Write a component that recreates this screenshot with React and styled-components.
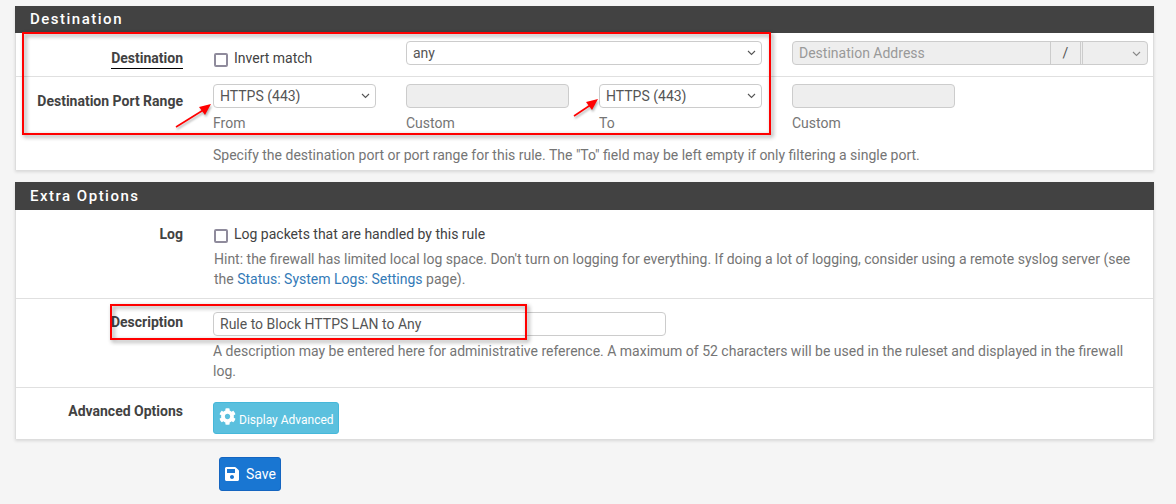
import React from "react";
import styled, { createGlobalStyle } from "styled-components";

const Global = createGlobalStyle`
  html, body { margin: 0; padding: 0; background: #f5f5f5; }
  body { font-family: Roboto, "Liberation Sans", sans-serif; font-size: 14px; line-height: 20px; color: #424242; overflow: hidden; }
`;
const Page = styled.div`
  position: relative;
  width: 1176px;
  height: 504px;
  padding: 6px 22px 0 15px;
  box-sizing: border-box;
`;
const Panel = styled.section`
  background: #fff;
  border-left: 1px solid #ddd;
  border-right: 1px solid #ddd;
  box-shadow: 0 2px 3px rgba(0,0,0,.12);
  margin-bottom: ${p => p.$mb || 12}px;
`;
const Heading = styled.h2`
  margin: 0 -1px;
  height: ${p => p.$h || 27}px;
  background: #424242;
  color: #fff;
  font-size: 15px;
  font-weight: 500;
  letter-spacing: 1.5px;
  line-height: ${p => p.$h || 27}px;
  padding-left: 15px;
`;
const Row = styled.div`
  display: grid;
  grid-template-columns: 167px 1fr;
  column-gap: 30px;
  height: ${p => p.$h}px;
  padding-top: ${p => p.$pt || 8}px;
  box-sizing: border-box;
  border-bottom: ${p => (p.$last ? "none" : "1px solid #e0e0e0")};
`;
const Label = styled.label`
  justify-self: end;
  align-self: start;
  font-weight: 700;
  font-size: 14px;
  line-height: 20px;
  margin-top: ${p => p.$mt || 0}px;
  color: #424242;
  ${p => p.$underline && "border-bottom: 1px solid #000; line-height: 18px; height: 19px;"}
`;
const Fields = styled.div`
  display: grid;
  grid-template-columns: repeat(5, 163px);
  column-gap: 30px;
`;
const CheckLabel = styled.div`
  display: flex;
  align-items: center;
  gap: 6px;
  height: 20px;
  margin-top: ${p => p.$mt || 0}px;
`;
const Box = styled.span`
  display: inline-block;
  box-sizing: border-box;
  width: 14px;
  height: 14px;
  margin: 3px 0 0 1px;
  border: 2px solid #8f8b9c;
  border-radius: 2px;
  background: #fff;
`;
const SelectWrap = styled.div`
  position: relative;
  grid-column: span ${p => p.$span || 1};
`;
const Select = styled.select`
  display: block;
  appearance: none;
  width: 100%;
  height: 24px;
  box-sizing: border-box;
  font: 14px Roboto, sans-serif;
  color: #555;
  background: #fff;
  border: 1px solid #ccc;
  border-radius: 4px;
  padding: 0 6px;
  outline: none;
`;
const ChevronIcon = styled.svg`
  position: absolute;
  right: 6px;
  top: 9px;
  width: 9px;
  height: 6px;
  pointer-events: none;
  fill: none;
  stroke: ${p => (p.$muted ? "#888" : "#555")};
  stroke-width: 1.1;
`;
const Chevron = ({ muted }) => (
  <ChevronIcon $muted={muted} viewBox="0 0 9 6"><path d="M1 1l3.5 3.5L8 1" /></ChevronIcon>
);
const Input = styled.input`
  display: block;
  width: ${p => p.$w || "100%"};
  height: 24px;
  box-sizing: border-box;
  font: 14px Roboto, sans-serif;
  color: #555;
  background: ${p => (p.disabled ? "#eee" : "#fff")};
  border: 1px solid #ccc;
  border-radius: 4px;
  padding: 0 6px;
  outline: none;
`;
const AddressGroup = styled.div`
  position: relative;
  grid-column: span 2;
  display: flex;
  width: 356px;
  height: 24px;
  box-sizing: border-box;
  border: 1px solid #ccc;
  border-radius: 4px;
  background: #eee;
`;
const AddressText = styled.div`
  flex: 1;
  color: #999;
  font-size: 14px;
  line-height: 22px;
  padding-left: 6px;
`;
const Slash = styled.div`
  width: 29px;
  text-align: center;
  line-height: 22px;
  color: #555;
  border-left: 1px solid #ccc;
  border-right: 1px solid #ccc;
`;
const MaskCell = styled.div`
  width: 64px;
  margin-left: 1px;
  border-left: 1px solid #ccc;
`;
const SubText = styled.div`
  color: #757575;
  font-size: 14px;
  line-height: 20px;
  margin-top: 5px;
`;
const Help = styled.p`
  margin: ${p => p.$mt || 0}px 0 0 ${p => p.$ml || 0}px;
  color: #757575;
  font-size: 14px;
  line-height: 20px;
  width: ${p => p.$w || "920px"};
`;
const HelpRow = styled.div`
  box-sizing: border-box;
  padding: ${p => p.$pt}px 0 0 197px;
  height: ${p => p.$h}px;
`;
const Link = styled.a`
  color: #337ab7;
  text-decoration: none;
`;
const InfoButton = styled.button`
  display: flex;
  align-items: center;
  gap: 3px;
  height: 32px;
  width: 126px;
  margin-top: 1px;
  box-sizing: border-box;
  padding: 0 0 0 5px;
  background: #5bc0de;
  border: 1px solid #46b8da;
  border-radius: 3px;
  color: #fff;
  font: 12px Roboto, sans-serif;
  & > span { margin-top: 3px; }
  & > svg { margin-top: -3px; }
`;
const SaveRow = styled.div`
  padding-left: 204px;
`;
const SaveButton = styled.button`
  display: flex;
  align-items: center;
  gap: 6px;
  height: 34px;
  width: 62px;
  box-sizing: border-box;
  padding: 0 0 0 4px;
  background: #1976d2;
  border: 1px solid #1565c0;
  border-radius: 3px;
  color: #fff;
  font: 14px Roboto, sans-serif;
`;
const RedBox = styled.div`
  position: absolute;
  left: ${p => p.$x}px;
  top: ${p => p.$y}px;
  width: ${p => p.$w}px;
  height: ${p => p.$h}px;
  box-sizing: border-box;
  border: 2px solid #f00;
  pointer-events: none;
  filter: drop-shadow(2px 2px 2px rgba(0,0,0,.45));
`;
const Arrow = styled.svg`
  position: absolute;
  left: ${p => p.$x}px;
  top: ${p => p.$y}px;
  overflow: visible;
  filter: drop-shadow(1px 2px 1px rgba(0,0,0,.3));
`;

const Gear = () => (
  <svg width="17" height="17" viewBox="0 0 512 512" fill="#fff">
    <path d="M487.4 315.7l-42.6-24.6c4.3-23.2 4.3-47 0-70.2l42.6-24.6c4.9-2.8 7.1-8.6 5.5-14-11.1-35.6-30-67.8-54.7-94.6-3.8-4.1-10-5.1-14.8-2.3L380.8 110c-17.9-15.4-38.5-27.3-60.8-35.1V25.8c0-5.6-3.9-10.5-9.4-11.7-36.7-8.2-74.3-7.8-109.2 0-5.5 1.2-9.4 6.1-9.4 11.7V75c-22.2 7.9-42.8 19.8-60.8 35.1L88.7 85.5c-4.9-2.8-11-1.9-14.8 2.3-24.7 26.7-43.6 58.9-54.7 94.6-1.7 5.4.6 11.2 5.5 14L67.3 221c-4.3 23.2-4.3 47 0 70.2l-42.6 24.6c-4.9 2.8-7.1 8.6-5.5 14 11.1 35.6 30 67.8 54.7 94.6 3.8 4.1 10 5.1 14.8 2.3l42.6-24.6c17.9 15.4 38.5 27.3 60.8 35.1v49.2c0 5.6 3.9 10.5 9.4 11.7 36.7 8.2 74.3 7.8 109.2 0 5.5-1.2 9.4-6.1 9.4-11.7v-49.2c22.2-7.9 42.8-19.8 60.8-35.1l42.6 24.6c4.9 2.8 11 1.9 14.8-2.3 24.7-26.7 43.6-58.9 54.7-94.6 1.5-5.5-.7-11.3-5.6-14.1zM256 336c-44.1 0-80-35.9-80-80s35.9-80 80-80 80 35.9 80 80-35.9 80-80 80z" />
  </svg>
);
const Floppy = () => (
  <svg width="16" height="16" viewBox="0 0 448 512" fill="#fff">
    <path d="M433.9 129.9l-83.9-83.9A48 48 0 0 0 316.1 32H48C21.5 32 0 53.5 0 80v352c0 26.5 21.5 48 48 48h352c26.5 0 48-21.5 48-48V163.9a48 48 0 0 0-14.1-34zM224 416c-35.3 0-64-28.7-64-64s28.7-64 64-64 64 28.7 64 64-28.7 64-64 64zm96-304.5V212c0 6.6-5.4 12-12 12H76c-6.6 0-12-5.4-12-12V108c0-6.6 5.4-12 12-12h228.5c3.2 0 6.2 1.3 8.5 3.5l3.5 3.5c2.3 2.3 3.5 5.3 3.5 8.5z" />
  </svg>
);
const RedArrow = ({ x, y, w, h }) => (
  <Arrow $x={x} $y={y} width={w} height={h} viewBox={`0 0 ${w} ${h}`}>
    <line x1="1" y1={h - 1} x2={w - 6} y2="5" stroke="#f00" strokeWidth="1.6" />
    <polygon points={`${w},0 ${w - 12},3 ${w - 6},11`} fill="#f00" />
  </Arrow>
);
const PortSelect = () => (
  <SelectWrap>
    <Select><option>HTTPS (443)</option></Select>
    <Chevron />
  </SelectWrap>
);

export default function App() {
  return (
    <Page>
      <Global />
      <Panel>
        <Heading>Destination</Heading>
        <Row $h={44}>
          <Label $underline $mt={8}>Destination</Label>
          <Fields>
            <CheckLabel $mt={7}><Box />Invert match</CheckLabel>
            <SelectWrap $span={2}>
              <Select defaultValue="any"><option>any</option></Select>
              <Chevron />
            </SelectWrap>
            <AddressGroup>
              <AddressText>Destination Address</AddressText>
              <Slash>/</Slash>
              <MaskCell />
              <Chevron muted />
            </AddressGroup>
          </Fields>
        </Row>
        <Row $h={60} $last $pt={7}>
          <Label $mt={7}>Destination Port Range</Label>
          <Fields>
            <div><PortSelect /><SubText>From</SubText></div>
            <div><Input disabled /><SubText>Custom</SubText></div>
            <div><PortSelect /><SubText>To</SubText></div>
            <div><Input disabled /><SubText>Custom</SubText></div>
          </Fields>
        </Row>
        <HelpRow $h={33} $pt={8}>
          <Help>Specify the destination port or port range for this rule. The "To" field may be left empty if only filtering a single port.</Help>
        </HelpRow>
      </Panel>
      <Panel $mb={18}>
        <Heading $h={28}>Extra Options</Heading>
        <Row $h={89} $pt={6}>
          <Label $mt={8}>Log</Label>
          <div>
            <CheckLabel $mt={8}><Box />Log packets that are handled by this rule</CheckLabel>
            <Help $mt={5} $ml={1} $w="925px">Hint: the firewall has limited local log space. Don't turn on logging for everything. If doing a lot of logging, consider using a remote syslog server (see the <Link>Status: System Logs: Settings</Link> page).</Help>
          </div>
        </Row>
        <Row $h={89} $pt={13}>
          <Label>Description</Label>
          <div>
            <Input $w="453px" defaultValue="Rule to Block HTTPS LAN to Any" />
            <Help $mt={5} $w="925px">A description may be entered here for administrative reference. A maximum of 52 characters will be used in the ruleset and displayed in the firewall log.</Help>
          </div>
        </Row>
        <Row $h={51} $pt={13} $last>
          <Label>Advanced Options</Label>
          <div><InfoButton><Gear /><span>Display Advanced</span></InfoButton></div>
        </Row>
      </Panel>
      <SaveRow>
        <SaveButton><Floppy />Save</SaveButton>
      </SaveRow>
      <RedBox $x={22} $y={32} $w={749} $h={103} />
      <RedBox $x={110} $y={304} $w={417} $h={36} />
      <RedArrow x={175} y={104} w={36} h={24} />
      <RedArrow x={573} y={99} w={25} h={18} />
    </Page>
  );
}
